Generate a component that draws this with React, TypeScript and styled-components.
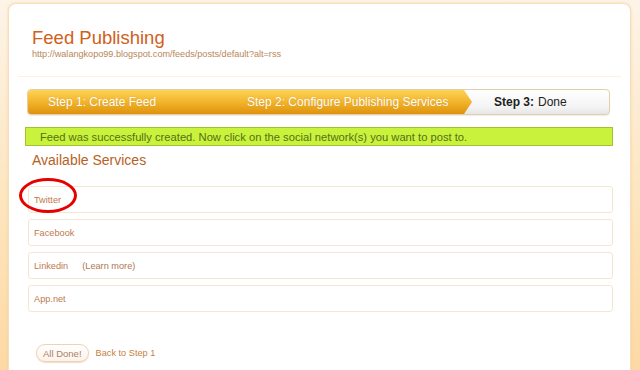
import React from "react";
import styled, { createGlobalStyle } from "styled-components";

const GlobalStyle = createGlobalStyle`
  html, body {
    margin: 0;
    padding: 0;
    height: 100%;
  }
  body {
    font-family: "Liberation Sans", Arial, sans-serif;
    background: linear-gradient(to bottom, #fdf4e8 0%, #fde4bb 60%, #fdd9a4 100%);
    overflow: hidden;
  }
`;

const Card = styled.div`
  margin: 3px 9px 0 8px;
  height: 380px;
  background: #fff;
  border: 1px solid #f7dfbd;
  border-radius: 8px;
  box-shadow: 0 0 3px rgba(240, 200, 140, 0.6);
  padding-top: 23px;
  box-sizing: border-box;
`;

const Header = styled.div`
  padding-left: 23px;
`;

const Title = styled.h1`
  margin: 0;
  font-size: 18.5px;
  line-height: 22px;
  font-weight: normal;
  color: #d0601a;
`;

const FeedUrl = styled.div`
  font-size: 9.1px;
  line-height: 11px;
  color: #b8865a;
`;

const Divider = styled.div`
  height: 1px;
  background: #fdf1e2;
  margin: 16px 9px 12px 9px;
`;

const StepBar = styled.div`
  display: flex;
  height: 24px;
  margin: 0 20px 0 18px;
  border: 1px solid #e6cfa8;
  border-radius: 4px;
  overflow: hidden;
  background: linear-gradient(to bottom, #ffffff 0%, #f4f4f4 70%, #e6e6e6 100%);
  box-shadow: 0 1px 1px rgba(0, 0, 0, 0.08);
`;

const Step = styled.div<{ $active?: boolean; $width?: number; $pad: number }>`
  position: relative;
  flex: ${(p) => (p.$width ? `0 0 ${p.$width}px` : "1")};
  padding-left: ${(p) => p.$pad}px;
  display: flex;
  align-items: center;
  white-space: nowrap;
  font-size: 12px;
  color: ${(p) => (p.$active ? "#fff" : "#222")};
  background: ${(p) =>
    p.$active ? "linear-gradient(to bottom, #fdd357 0%, #f2b42c 50%, #de920e 100%)" : "transparent"};
  text-shadow: ${(p) => (p.$active ? "0 0 1px rgba(160, 90, 0, 0.35)" : "none")};
  box-sizing: border-box;
  z-index: ${(p) => (p.$active ? 2 : 1)};

  b {
    font-weight: bold;
    margin-right: 4px;
  }
`;

const Arrow = styled.span<{ $dark?: boolean }>`
  position: absolute;
  top: 0;
  right: -8px;
  width: 8px;
  height: 100%;
  clip-path: polygon(0 0, 100% 50%, 0 100%);
  background: ${(p) =>
    p.$dark
      ? "linear-gradient(to bottom, #d89a20 0%, #8e5804 100%)"
      : "linear-gradient(to bottom, #fdd357 0%, #f2b42c 50%, #de920e 100%)"};
`;

const ArrowInner = styled.span`
  position: absolute;
  top: 0;
  right: -6px;
  width: 7px;
  height: 100%;
  clip-path: polygon(0 0, 100% 50%, 0 100%);
  background: linear-gradient(to bottom, #fdd357 0%, #f2b42c 50%, #de920e 100%);
`;

const Notice = styled.div`
  margin: 12px 17px 0 16px;
  height: 19px;
  box-sizing: border-box;
  padding-left: 14px;
  display: flex;
  align-items: center;
  background: #c9f23c;
  border: 1px solid #a3c232;
  font-size: 11.2px;
  color: #557018;
`;

const SectionTitle = styled.h2`
  margin: 5px 0 0 23px;
  font-size: 14px;
  line-height: 18px;
  font-weight: normal;
  color: #b8611e;
`;

const ServiceList = styled.div`
  margin: 17px 17px 0 19px;
  display: flex;
  flex-direction: column;
  gap: 6px;
`;

const ServiceRow = styled.div`
  position: relative;
  height: 27px;
  box-sizing: border-box;
  border: 1px solid #f5e6d2;
  border-radius: 3px;
  padding-left: 5px;
  display: flex;
  align-items: center;
  font-size: 9.2px;
  color: #c07a4c;
`;

const LearnMore = styled.span`
  margin-left: 14px;
  color: #b07850;
`;

const Circle = styled.span`
  position: absolute;
  left: -10px;
  top: -9px;
  width: 58px;
  height: 35px;
  border: 3px solid #e60000;
  border-radius: 50%;
  box-sizing: border-box;
`;

const Footer = styled.div`
  margin: 32px 0 0 27px;
  display: flex;
  align-items: center;
  gap: 7px;
`;

const DoneButton = styled.button`
  height: 18px;
  padding: 0 6px;
  border: 1px solid #f0d2b4;
  border-radius: 9px;
  background: linear-gradient(to bottom, #ffffff 0%, #fdf3ea 100%);
  box-shadow: 0 1px 1px rgba(220, 170, 120, 0.4);
  font-family: "Liberation Sans", Arial, sans-serif;
  font-size: 9.5px;
  color: #a88268;
  cursor: pointer;
`;

const BackLink = styled.a`
  font-size: 9.2px;
  color: #c4823e;
  text-decoration: none;
`;

const services = ["Twitter", "Facebook", "Linkedin", "App.net"];

function App() {
  return (
    <>
      <GlobalStyle />
      <Card>
        <Header>
          <Title>Feed Publishing</Title>
          <FeedUrl>http://walangkopo99.blogspot.com/feeds/posts/default?alt=rss</FeedUrl>
        </Header>
        <Divider />
        <StepBar>
          <Step $active $width={191} $pad={20}>
            Step 1: Create Feed
            <Arrow $dark />
            <ArrowInner />
          </Step>
          <Step $active $width={245} $pad={28}>
            Step 2: Configure Publishing Services
            <Arrow />
          </Step>
          <Step $pad={30}>
            <b>Step 3:</b> Done
          </Step>
        </StepBar>
        <Notice>
          Feed was successfully created. Now click on the social network(s) you want to post to.
        </Notice>
        <SectionTitle>Available Services</SectionTitle>
        <ServiceList>
          {services.map((s) => (
            <ServiceRow key={s}>
              {s}
              {s === "Linkedin" && <LearnMore>(Learn more)</LearnMore>}
              {s === "Twitter" && <Circle />}
            </ServiceRow>
          ))}
        </ServiceList>
        <Footer>
          <DoneButton>All Done!</DoneButton>
          <BackLink href="#">Back to Step 1</BackLink>
        </Footer>
      </Card>
    </>
  );
}

export default App;
